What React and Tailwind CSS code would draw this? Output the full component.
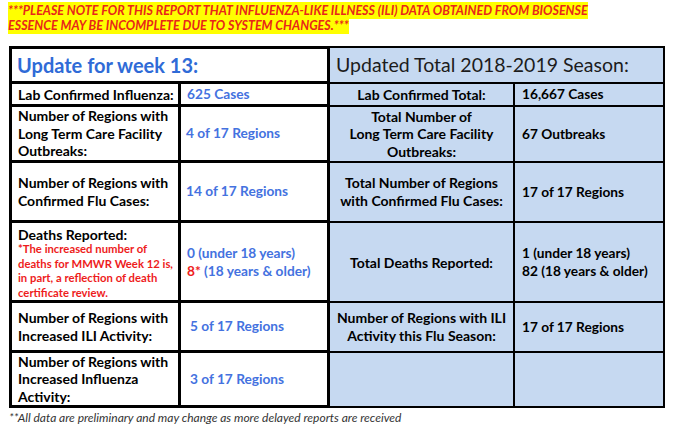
import React from 'react';

const font = { fontFamily: 'Lato, "Open Sans", sans-serif' };

function LeftCell({ children, className = '' }) {
  return <div className={`bg-white flex items-center ${className}`}>{children}</div>;
}

function RightCell({ children, className = '' }) {
  return <div className={`bg-[#c6d9f1] flex items-center ${className}`}>{children}</div>;
}

export default function App() {
  return (
    <div className="w-[674px] h-[429px] bg-white relative text-black" style={font}>
      {/* highlighted notice */}
      <div className="pt-[3px] pl-[8px] text-[12.5px] leading-[15px] font-bold italic text-[#e8261a]">
        <span className="bg-[#ffff00] [box-decoration-break:clone] py-[1px]">
          ***PLEASE NOTE FOR THIS REPORT THAT INFLUENZA-LIKE ILLNESS (ILI) DATA OBTAINED FROM BIOSENSE
          <br />
          ESSENCE MAY BE INCOMPLETE DUE TO SYSTEM CHANGES.***
        </span>
      </div>

      <div className="flex mt-[13px] ml-[9px]">
        {/* this week */}
        <div className="w-[321px] border-[3px] border-black bg-black grid grid-cols-[166px_146px] grid-rows-[32px_20px_53px_57px_77px_47px_52px] gap-[3px]">
          <LeftCell className="col-span-2 pl-[5px]">
            <span className="text-[20px] font-bold text-[#2f6bd7]">Update for week 13:</span>
          </LeftCell>

          <LeftCell className="pl-[6px] text-[14px] font-bold">Lab Confirmed Influenza:</LeftCell>
          <LeftCell className="pl-[6px] text-[13.7px] font-bold text-[#4472e0]">625 Cases</LeftCell>

          <LeftCell className="pl-[6px] text-[14px] font-bold leading-[17.5px]">
            <div>Number of Regions with<br />Long Term Care Facility<br />Outbreaks:</div>
          </LeftCell>
          <LeftCell className="pl-[5px] text-[13.7px] font-bold text-[#4472e0]">4 of 17 Regions</LeftCell>

          <LeftCell className="pl-[6px] text-[14px] font-bold leading-[18px]">
            <div>Number of Regions with<br />Confirmed Flu Cases:</div>
          </LeftCell>
          <LeftCell className="pl-[5px] text-[13.7px] font-bold text-[#4472e0]">14 of 17 Regions</LeftCell>

          <div className="bg-white pl-[6px] pt-[4px]">
            <div className="text-[14px] font-bold leading-[15px]">Deaths Reported:</div>
            <div className="text-[11.3px] font-bold leading-[14.5px] text-[#ee1c1c]">
              *The increased number of
              <br />
              deaths for MMWR Week 12 is,
              <br />
              in part, a reflection of death
              <br />
              certificate review.
            </div>
          </div>
          <LeftCell className="pl-[6px] text-[13.7px] font-bold text-[#4472e0] leading-[18px]">
            <div>
              0 (under 18 years)
              <br />
              <span className="text-[#ee1c1c]">8*</span> (18 years &amp; older)
            </div>
          </LeftCell>

          <LeftCell className="pl-[6px] text-[14px] font-bold leading-[18px]">
            <div>Number of Regions with<br />Increased ILI Activity:</div>
          </LeftCell>
          <LeftCell className="pl-[9px] text-[13.7px] font-bold text-[#4472e0]">5 of 17 Regions</LeftCell>

          <LeftCell className="pl-[6px] text-[14px] font-bold leading-[17.5px]">
            <div>Number of Regions with<br />Increased Influenza<br />Activity:</div>
          </LeftCell>
          <LeftCell className="pl-[9px] text-[13.7px] font-bold text-[#4472e0]">3 of 17 Regions</LeftCell>
        </div>

        {/* season totals */}
        <div className="w-[335px] border-2 border-l-0 border-black bg-black grid grid-cols-[183px_148px] grid-rows-[34px_21px_54px_58px_78px_48px_53px] gap-[2px]">
          <RightCell className="col-span-2 pl-[6px]">
            <span className="text-[19.5px] text-[#1c1c1c]">Updated Total 2018-2019 Season:</span>
          </RightCell>

          <RightCell className="justify-center text-[14px] font-bold">Lab Confirmed Total:</RightCell>
          <RightCell className="pl-[7px] text-[13.7px] font-bold">16,667 Cases</RightCell>

          <RightCell className="justify-center text-center text-[14px] font-bold leading-[17.5px]">
            <div>Total Number of<br />Long Term Care Facility<br />Outbreaks:</div>
          </RightCell>
          <RightCell className="pl-[7px] text-[13.7px] font-bold">67 Outbreaks</RightCell>

          <RightCell className="justify-center text-center text-[14px] font-bold leading-[18px]">
            <div>Total Number of Regions<br />with Confirmed Flu Cases:</div>
          </RightCell>
          <RightCell className="pl-[7px] text-[13.7px] font-bold">17 of 17 Regions</RightCell>

          <RightCell className="justify-center text-[14px] font-bold">Total Deaths Reported:</RightCell>
          <RightCell className="pl-[7px] text-[13.7px] font-bold leading-[18px]">
            <div>1 (under 18 years)<br />82 (18 years &amp; older)</div>
          </RightCell>

          <RightCell className="justify-center text-center text-[14px] font-bold leading-[18px]">
            <div>Number of Regions with ILI<br />Activity this Flu Season:</div>
          </RightCell>
          <RightCell className="pl-[7px] text-[13.7px] font-bold">17 of 17 Regions</RightCell>

          <RightCell />
          <RightCell />
        </div>
      </div>

      <div className="ml-[9px] mt-[2px] text-[12px] leading-[16px] italic text-[#333]">
        **All data are preliminary and may change as more delayed reports are received
      </div>
    </div>
  );
}
